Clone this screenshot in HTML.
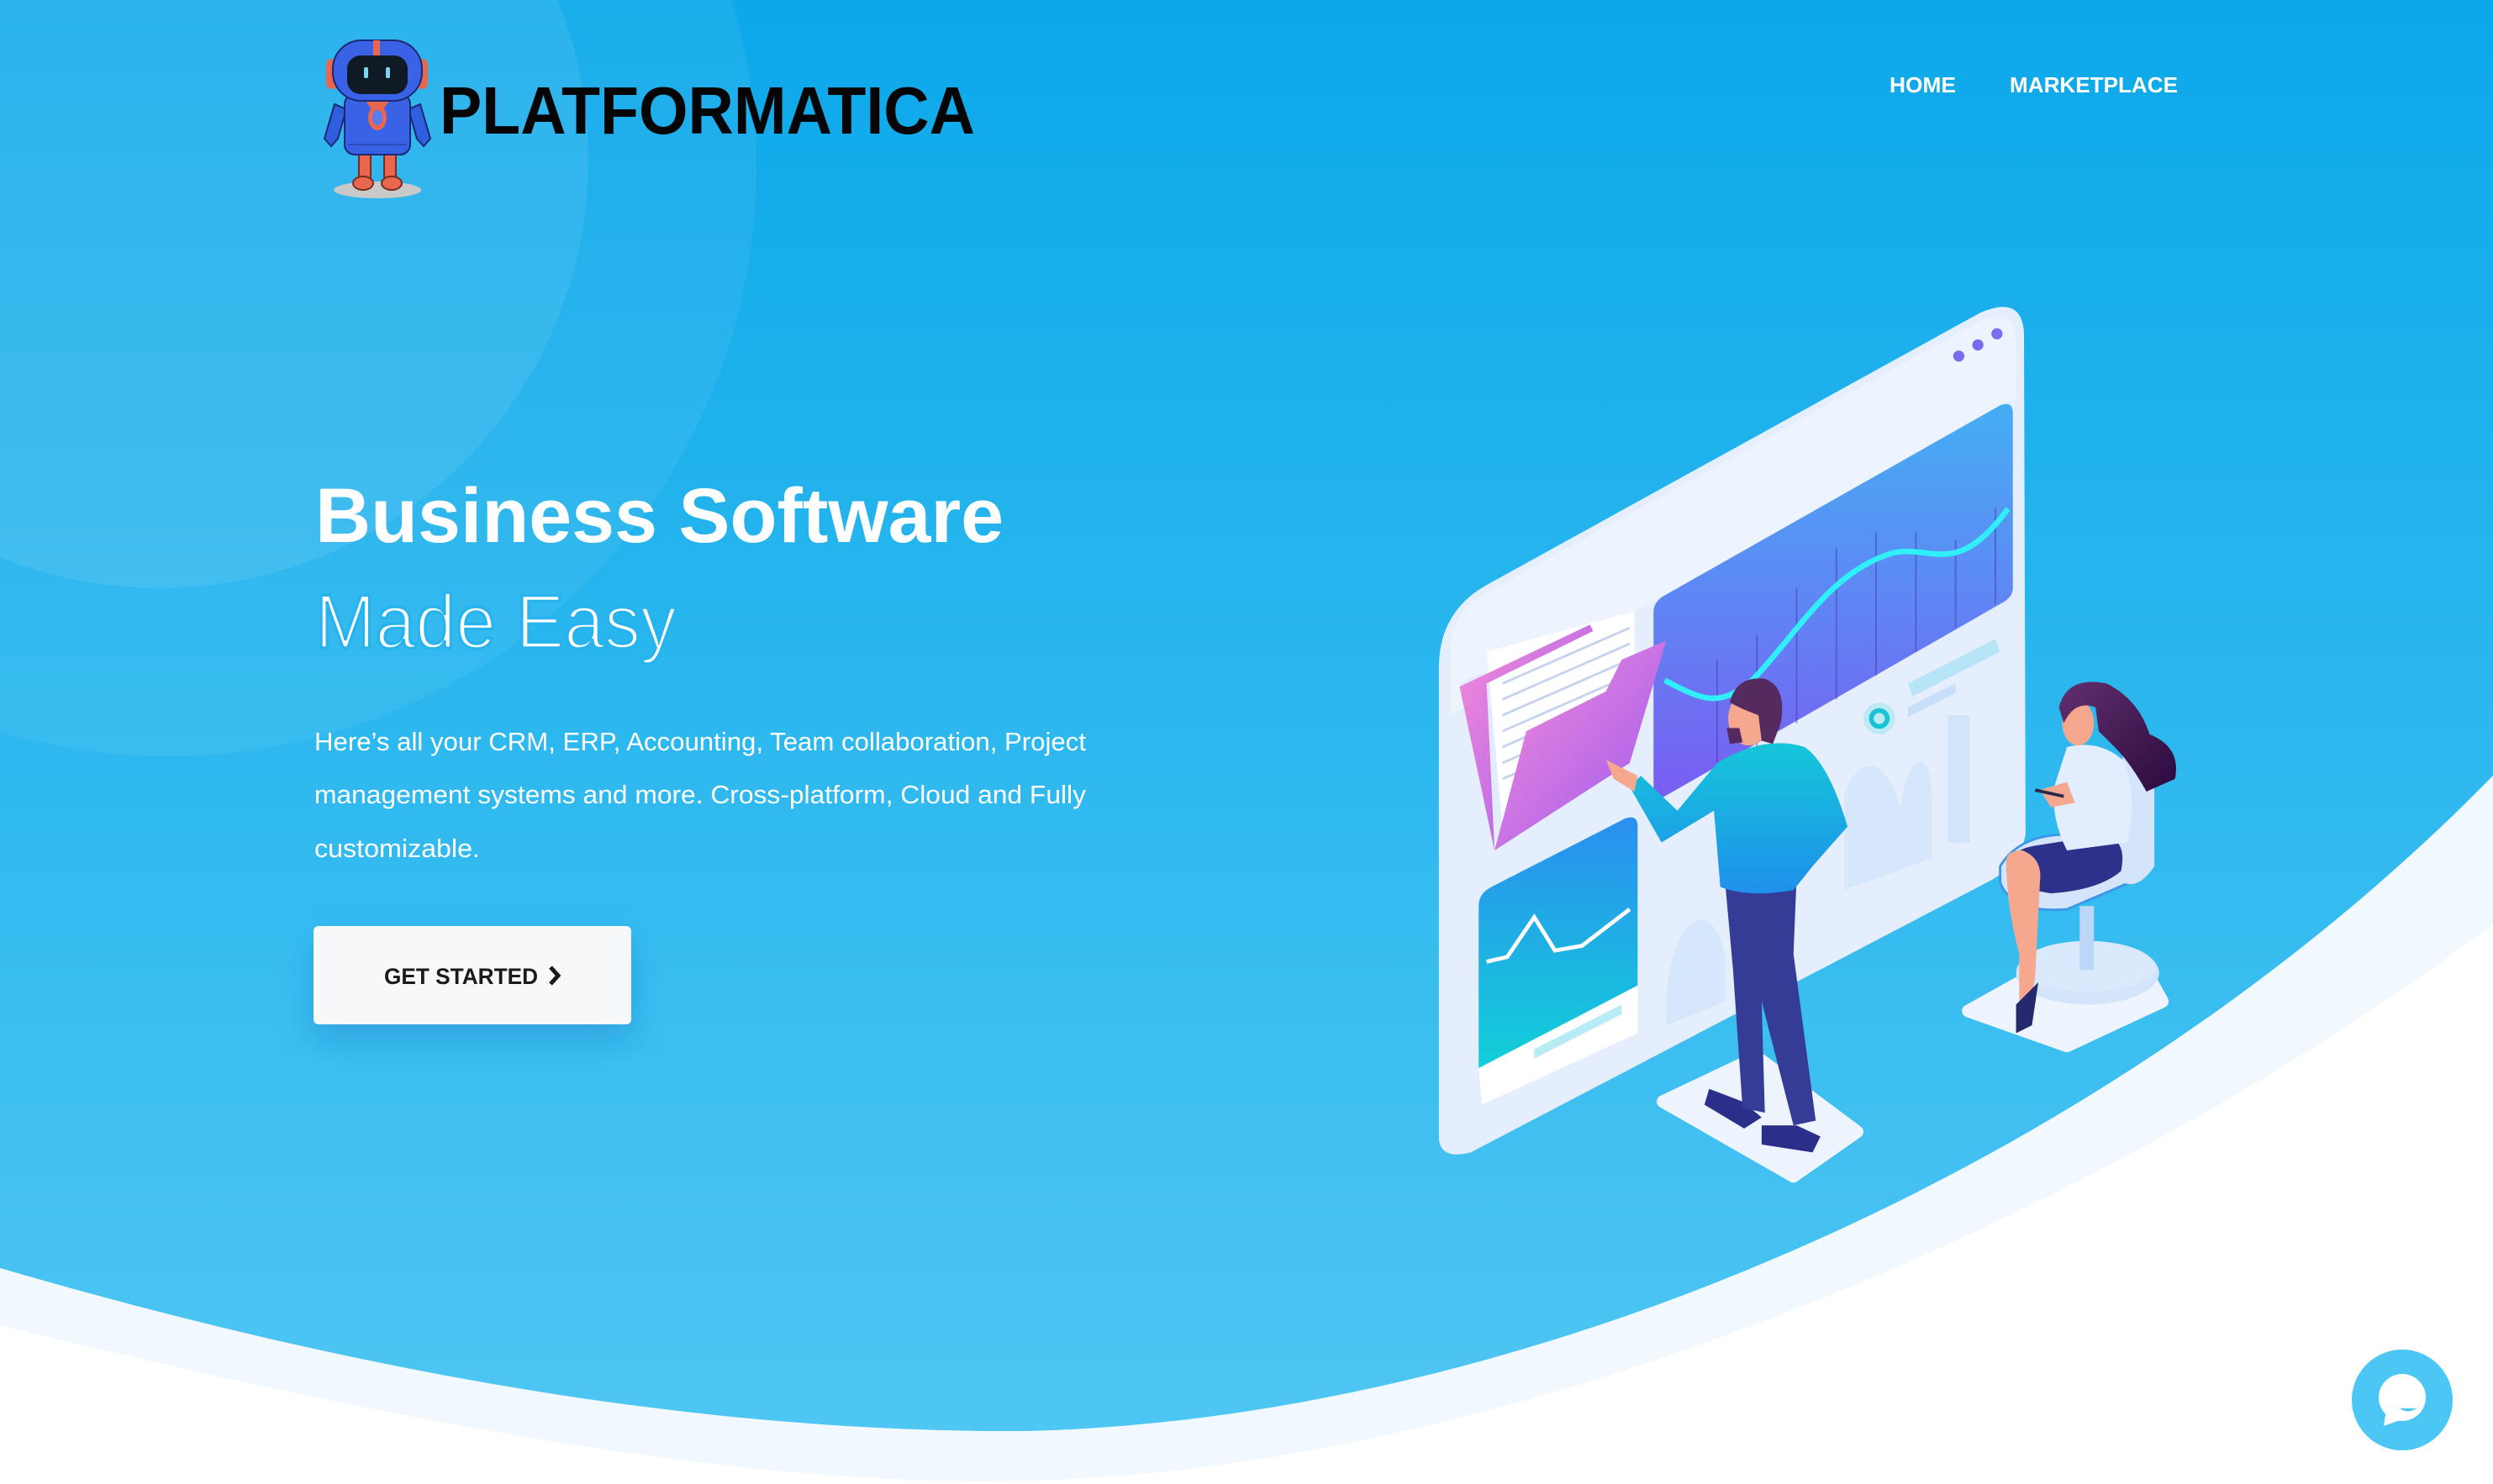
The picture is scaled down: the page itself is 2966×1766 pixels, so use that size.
<!DOCTYPE html>
<html><head><meta charset="utf-8"><style>
html,body{margin:0;padding:0;width:2966px;height:1766px;overflow:hidden;background:#fff}
svg{display:block}
</style></head><body>
<svg width="2966" height="1766" viewBox="0 0 2966 1766" xmlns="http://www.w3.org/2000/svg">
<defs>
<linearGradient id="bg" x1="0" y1="0" x2="0" y2="1"><stop offset="0" stop-color="#0ca8ea"/><stop offset="0.55" stop-color="#2fb9ef"/><stop offset="1" stop-color="#4fc6f3"/></linearGradient>
<linearGradient id="chart" x1="0" y1="0" x2="0" y2="1"><stop offset="0" stop-color="#45aef5"/><stop offset="1" stop-color="#7a5cf2"/></linearGradient>
<linearGradient id="fold" x1="0" y1="0" x2="1" y2="1"><stop offset="0" stop-color="#f78bd8"/><stop offset="1" stop-color="#9a5af0"/></linearGradient>
<linearGradient id="teal" x1="0" y1="0" x2="0" y2="1"><stop offset="0" stop-color="#2b8ff0"/><stop offset="1" stop-color="#12cfd8"/></linearGradient>
<linearGradient id="shirt" x1="0" y1="0" x2="0" y2="1"><stop offset="0" stop-color="#16c6d9"/><stop offset="1" stop-color="#1e90ec"/></linearGradient>
<linearGradient id="hair" x1="0" y1="0" x2="1" y2="1"><stop offset="0" stop-color="#62306e"/><stop offset="1" stop-color="#2a0a3e"/></linearGradient>
<filter id="sh" x="-30%" y="-30%" width="160%" height="190%"><feDropShadow dx="0" dy="18" stdDeviation="20" flood-color="#1a6fc0" flood-opacity="0.35"/></filter>
</defs>
<rect width="2966" height="1766" fill="#fff"/>
<path d="M0,1577 C500,1700 900,1770 1220,1762 C1800,1750 2500,1450 2966,1100 L2966,0 L0,0 Z" fill="#f1f9fe"/>
<path d="M0,1509 C450,1640 850,1705 1220,1703 C1800,1690 2500,1400 2966,923 L2966,0 L0,0 Z" fill="url(#bg)"/>
<circle cx="200" cy="200" r="700" fill="#ffffff" opacity="0.06"/>
<circle cx="190" cy="190" r="510" fill="#ffffff" opacity="0.08"/>

<!-- Robot logo -->
<g>
<ellipse cx="449" cy="226" rx="52" ry="10" fill="#c9c9c9"/>
<rect x="427" y="180" width="14" height="34" rx="4" fill="#e8674e" stroke="#7a2a1e" stroke-width="2"/>
<rect x="457" y="180" width="14" height="34" rx="4" fill="#e8674e" stroke="#7a2a1e" stroke-width="2"/>
<ellipse cx="432" cy="218" rx="12" ry="8" fill="#e8674e" stroke="#7a2a1e" stroke-width="2"/>
<ellipse cx="466" cy="218" rx="12" ry="8" fill="#e8674e" stroke="#7a2a1e" stroke-width="2"/>
<path d="M398,124 L386,165 L394,174 L402,165 L412,130 Z" fill="#2f5ee0" stroke="#1a2a70" stroke-width="2"/>
<path d="M500,124 L512,165 L504,174 L496,165 L486,130 Z" fill="#2f5ee0" stroke="#1a2a70" stroke-width="2"/>
<rect x="410" y="112" width="78" height="72" rx="12" fill="#3a62e6" stroke="#1a2a70" stroke-width="2"/>
<path d="M432,116 L449,140 L466,116 Z" fill="#e8674e"/>
<ellipse cx="449" cy="140" rx="11" ry="15" fill="#e8674e"/><ellipse cx="449" cy="140" rx="6" ry="9" fill="#5a7cf0"/>
<line x1="414" y1="172" x2="484" y2="172" stroke="#1a2a70" stroke-width="1.5" opacity="0.5"/>
<rect x="388" y="70" width="14" height="36" rx="7" fill="#e8674e"/><rect x="495" y="70" width="14" height="36" rx="7" fill="#e8674e"/>
<rect x="396" y="48" width="106" height="72" rx="34" fill="#3a62e6" stroke="#1a2a70" stroke-width="2"/>
<rect x="444" y="48" width="8" height="24" fill="#e8674e"/>
<rect x="413" y="66" width="72" height="46" rx="16" fill="#0f1a24"/>
<rect x="433" y="80" width="5" height="13" rx="2" fill="#7fd3f0"/><rect x="459" y="80" width="5" height="13" rx="2" fill="#7fd3f0"/>
</g>
<text x="523" y="159" font-family="Liberation Sans, Arial, sans-serif" font-weight="bold" font-size="80" fill="#050505" textLength="637" lengthAdjust="spacingAndGlyphs">PLATFORMATICA</text>

<!-- Nav -->
<text x="2248" y="110" font-family="Liberation Sans, Arial, sans-serif" font-weight="bold" font-size="26" fill="#fff" textLength="79" lengthAdjust="spacingAndGlyphs">HOME</text>
<text x="2391" y="110" font-family="Liberation Sans, Arial, sans-serif" font-weight="bold" font-size="26" fill="#fff" textLength="200" lengthAdjust="spacingAndGlyphs">MARKETPLACE</text>

<!-- Hero text -->
<text x="375" y="645" font-family="Liberation Sans, Arial, sans-serif" font-weight="bold" font-size="92" fill="#fff" textLength="819" lengthAdjust="spacingAndGlyphs">Business Software</text>
<text x="375" y="771" font-family="Liberation Sans, Arial, sans-serif" font-size="91" fill="#fff" stroke="#27b3ee" stroke-width="3.5" textLength="430" lengthAdjust="spacingAndGlyphs">Made Easy</text>
<g font-family="Liberation Sans, Arial, sans-serif" font-size="31" fill="#fff">
<text x="374" y="893" textLength="918" lengthAdjust="spacingAndGlyphs">Here’s all your CRM, ERP, Accounting, Team collaboration, Project</text>
<text x="374" y="956" textLength="918" lengthAdjust="spacingAndGlyphs">management systems and more. Cross-platform, Cloud and Fully</text>
<text x="374" y="1020" textLength="197" lengthAdjust="spacingAndGlyphs">customizable.</text>
</g>
<rect x="373" y="1102" width="378" height="117" rx="6" fill="#f7f8fa" filter="url(#sh)"/>
<text x="457" y="1171" font-family="Liberation Sans, Arial, sans-serif" font-weight="bold" font-size="27" fill="#1a1a1a" textLength="183" lengthAdjust="spacingAndGlyphs">GET STARTED</text>
<path d="M655,1151 L664,1161 L655,1171" fill="none" stroke="#1a1a1a" stroke-width="5"/>

<!-- Illustration (display coords) -->
<g transform="scale(1.8916)">
<path d="M1046,693 L1105,665 L1168,712 L1128,740 Z" fill="#eef4fe" stroke="#eef4fe" stroke-width="8" stroke-linejoin="round"/>
<path d="M1238,636 L1290,607 L1350,612 L1360,630 L1300,658 Z" fill="#eef4fe" stroke="#eef4fe" stroke-width="8" stroke-linejoin="round"/>
<path d="M905,715 L905,420 Q905,385 935,368 L1245,197 Q1272,185 1273,210 L1274,525 Q1270,545 1250,555 L925,725 Q905,730 905,715 Z" fill="#e4eefd"/>
<path d="M912,405 Q915,382 940,370 L1245,202 Q1266,193 1268,212 L1268,250 L912,450 Z" fill="#eef4fe"/>
<circle cx="1232" cy="224" r="3.5" fill="#7a6cf0"/><circle cx="1244" cy="217" r="3.5" fill="#7a6cf0"/><circle cx="1256" cy="210" r="3.5" fill="#7a6cf0"/>
<path d="M1040,385 Q1040,378 1048,374 L1258,255 Q1266,252 1266,260 L1266,370 Q1266,376 1258,380 L1040,505 Z" fill="url(#chart)"/>
<g stroke="#3d3fa8" stroke-width="1" opacity="0.5">
<line x1="1080" y1="415" x2="1080" y2="480"/><line x1="1105" y1="400" x2="1105" y2="470"/><line x1="1130" y1="370" x2="1130" y2="455"/><line x1="1155" y1="345" x2="1155" y2="440"/><line x1="1180" y1="335" x2="1180" y2="425"/><line x1="1205" y1="335" x2="1205" y2="410"/><line x1="1230" y1="340" x2="1230" y2="395"/><line x1="1255" y1="320" x2="1255" y2="380"/>
</g>
<path d="M1047,428 C1070,440 1080,445 1100,430 C1130,400 1150,360 1190,348 C1215,342 1230,365 1263,320" fill="none" stroke="#2ff0f8" stroke-width="3.5"/>
<circle cx="1182" cy="452" r="10" fill="#bde9f5"/><circle cx="1182" cy="452" r="5" fill="none" stroke="#19c3d6" stroke-width="3"/>
<path d="M1200,430 L1255,402 L1258,410 L1203,438 Z" fill="#b7e5f8"/>
<path d="M1200,445 L1230,430 L1230,436 L1200,451 Z" fill="#c9def8"/>
<rect x="1225" y="450" width="14" height="80" fill="#d3e4fa"/>
<path d="M1160,500 C1170,470 1190,480 1195,510 C1200,470 1215,470 1215,500 L1215,540 L1160,560 Z" fill="#d6e6fb"/>
<path d="M1048,630 C1050,580 1075,560 1085,600 L1085,630 L1048,645 Z" fill="#d6e6fb"/>
<path d="M918,430 L1000,392 L1005,398 L1030,385 L945,535 Z" fill="#e3ecfd"/>
<path d="M935,410 L1000,392 L1028,385 L1028,470 L945,520 Z" fill="#ffffff"/>
<g stroke="#c5d3ec" stroke-width="1.5"><line x1="945" y1="430" x2="1025" y2="395"/><line x1="945" y1="440" x2="1025" y2="405"/><line x1="945" y1="450" x2="1025" y2="415"/><line x1="945" y1="460" x2="1025" y2="425"/><line x1="945" y1="470" x2="1025" y2="435"/><line x1="945" y1="480" x2="1025" y2="445"/><line x1="945" y1="490" x2="1015" y2="460"/></g>
<path d="M918,432 L1000,393 L1002,397 L935,430 L940,535 Z" fill="url(#fold)"/>
<path d="M940,535 L960,460 L1010,435 L1020,415 L1048,403 L1025,480 Z" fill="url(#fold)"/>
<path d="M930,570 Q930,562 938,558 L1022,515 Q1030,512 1030,520 L1030,620 L930,672 Z" fill="url(#teal)"/>
<path d="M930,672 L1030,620 L1030,650 L932,695 Z" fill="#ffffff"/>
<path d="M935,605 L948,602 L965,577 L978,598 L995,595 L1025,572" fill="none" stroke="#fff" stroke-width="2.5"/>
<path d="M965,660 L1020,632 L1020,638 L965,666 Z" fill="#b7ecf4"/>
<!-- man -->
<path d="M1075,685 L1096,693 L1108,703 L1097,710 L1072,695 Z" fill="#2b2f8a"/>
<path d="M1108,708 L1130,708 L1145,715 L1140,725 L1108,720 Z" fill="#2b2f8a"/>
<path d="M1085,555 L1130,552 L1128,600 L1142,705 L1128,708 L1108,630 L1110,700 L1096,697 L1090,610 Z" fill="#343c96"/>
<path d="M1080,480 Q1110,462 1135,470 Q1150,480 1162,520 L1140,545 L1128,560 Q1100,565 1082,558 L1078,510 L1045,530 L1025,495 L1032,488 L1055,510 Z" fill="url(#shirt)"/>
<path d="M1010,478 L1030,488 L1028,498 L1015,490 Z" fill="#f6a88f"/>
<ellipse cx="1100" cy="452" rx="13" ry="17" fill="#f6a88f"/>
<path d="M1088,442 Q1092,425 1110,427 Q1124,432 1120,455 L1115,468 L1108,466 L1106,450 L1096,446 Z" fill="#552a5e"/>
<path d="M1086,458 L1088,468 L1096,467 L1094,458 Z" fill="#552a5e"/>
<!-- woman chair -->
<ellipse cx="1313" cy="612" rx="45" ry="20" fill="#d4e5fb"/>
<ellipse cx="1313" cy="608" rx="42" ry="16" fill="#dbe9fc"/>
<rect x="1308" y="570" width="9" height="40" fill="#bcd6f7"/>
<path d="M1258,545 Q1270,525 1300,525 L1340,525 Q1350,540 1340,555 L1300,572 Q1265,575 1258,555 Z" fill="#d4e5fb" stroke="#3b96ea" stroke-width="1.5"/>
<path d="M1335,470 Q1352,470 1355,490 L1355,545 Q1345,560 1335,555 Z" fill="#d4e5fb"/>
<path d="M1262,548 Q1262,535 1280,532 L1325,525 Q1338,530 1334,548 Q1320,560 1290,562 Q1275,560 1270,555 Z" fill="#2c3289"/>
<path d="M1262,545 Q1260,535 1272,535 Q1285,540 1283,555 L1280,615 L1275,640 L1270,640 L1270,600 Q1262,570 1262,545 Z" fill="#f6a88f"/>
<path d="M1268,632 L1282,618 L1278,645 L1268,650 Z" fill="#252a6f"/>
<path d="M1300,470 Q1320,465 1335,478 Q1345,500 1338,530 L1300,535 Q1290,515 1292,495 Z" fill="#e2edfd"/>
<path d="M1283,497 L1300,492 L1305,505 L1290,508 Z" fill="#f6a88f"/>
<line x1="1280" y1="497" x2="1298" y2="501" stroke="#2a2a4a" stroke-width="2"/>
<ellipse cx="1307" cy="455" rx="10" ry="14" fill="#f6a88f"/>
<path d="M1295,445 Q1300,425 1325,430 Q1345,440 1352,462 Q1372,470 1368,490 L1350,498 Q1340,480 1330,470 L1320,460 L1318,445 Q1305,440 1298,455 Z" fill="url(#hair)"/>
</g>

<circle cx="2858" cy="1666" r="60" fill="#4cc6f4"/>
<circle cx="2858" cy="1663" r="28" fill="#fff"/>
<path d="M2838,1683 L2836,1697 L2858,1689 Z" fill="#fff"/>
<path d="M2855,1676 Q2865,1683 2875,1676 Z" fill="#4cc6f4"/>
</svg>
</body></html>
